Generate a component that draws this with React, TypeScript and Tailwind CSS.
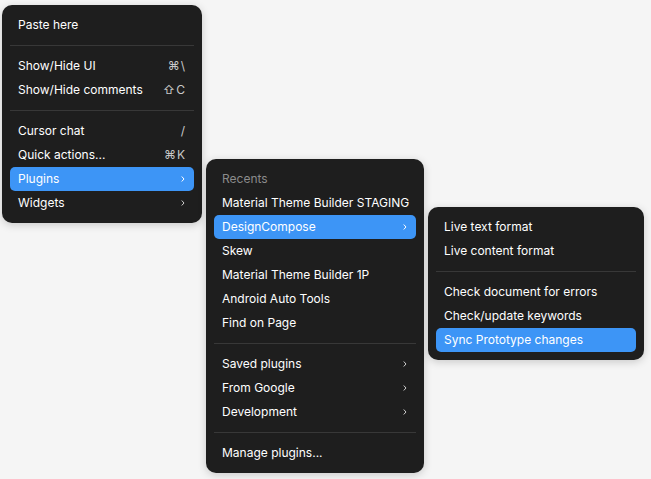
import React from "react";

type Item =
  | { kind: "item"; label: string; shortcut?: string; sub?: boolean; active?: boolean; muted?: boolean }
  | { kind: "sep" };

const mainMenu: Item[] = [
  { kind: "item", label: "Paste here" },
  { kind: "sep" },
  { kind: "item", label: "Show/Hide UI", shortcut: "⌘\\" },
  { kind: "item", label: "Show/Hide comments", shortcut: "⇧C" },
  { kind: "sep" },
  { kind: "item", label: "Cursor chat", shortcut: "/" },
  { kind: "item", label: "Quick actions...", shortcut: "⌘K" },
  { kind: "item", label: "Plugins", sub: true, active: true },
  { kind: "item", label: "Widgets", sub: true },
];

const pluginsMenu: Item[] = [
  { kind: "item", label: "Recents", muted: true },
  { kind: "item", label: "Material Theme Builder STAGING" },
  { kind: "item", label: "DesignCompose", sub: true, active: true },
  { kind: "item", label: "Skew" },
  { kind: "item", label: "Material Theme Builder 1P" },
  { kind: "item", label: "Android Auto Tools" },
  { kind: "item", label: "Find on Page" },
  { kind: "sep" },
  { kind: "item", label: "Saved plugins", sub: true },
  { kind: "item", label: "From Google", sub: true },
  { kind: "item", label: "Development", sub: true },
  { kind: "sep" },
  { kind: "item", label: "Manage plugins..." },
];

const composeMenu: Item[] = [
  { kind: "item", label: "Live text format" },
  { kind: "item", label: "Live content format" },
  { kind: "sep" },
  { kind: "item", label: "Check document for errors" },
  { kind: "item", label: "Check/update keywords" },
  { kind: "item", label: "Sync Prototype changes", active: true },
];

function Chevron() {
  return (
    <svg width="4" height="6" viewBox="0 0 4 6" fill="none" className="mr-[1px]">
      <path d="M1 0.8 L3 3 L1 5.2" stroke="currentColor" strokeWidth="1" strokeLinecap="round" strokeLinejoin="round" />
    </svg>
  );
}

function Menu({ items, className }: { items: Item[]; className: string }) {
  return (
    <div
      className={`absolute rounded-[10px] bg-[#1e1e1e] py-2 shadow-[0_2px_8px_rgba(0,0,0,0.18)] ${className}`}
    >
      {items.map((it, i) =>
        it.kind === "sep" ? (
          <div key={i} className="mx-2 my-2 h-px bg-[#383838]" />
        ) : (
          <div
            key={i}
            className={`mx-2 flex h-6 items-center justify-between whitespace-nowrap rounded-[5px] px-2 text-[12px] leading-none ${
              it.active ? "bg-[#3d95f6] text-white" : it.muted ? "text-[#8b8b8b]" : "text-white"
            }`}
          >
            <span className="-mt-[1px]">{it.label}</span>
            {it.shortcut && <span className="-mt-[1px] text-[#c9c9c9] tracking-[1px]">{it.shortcut}</span>}
            {it.sub && <span className={it.active ? "text-white" : "text-[#cfcfcf]"}><Chevron /></span>}
          </div>
        )
      )}
    </div>
  );
}

export default function App() {
  return (
    <div
      className="relative h-[479px] w-[651px] overflow-hidden bg-[#f5f5f5]"
      style={{ fontFamily: "Inter, 'Liberation Sans', sans-serif" }}
    >
      <Menu items={mainMenu} className="left-[2px] top-[5px] w-[200px]" />
      <Menu items={pluginsMenu} className="left-[206px] top-[159px] w-[218px]" />
      <Menu items={composeMenu} className="left-[428px] top-[207px] w-[216px]" />
    </div>
  );
}
